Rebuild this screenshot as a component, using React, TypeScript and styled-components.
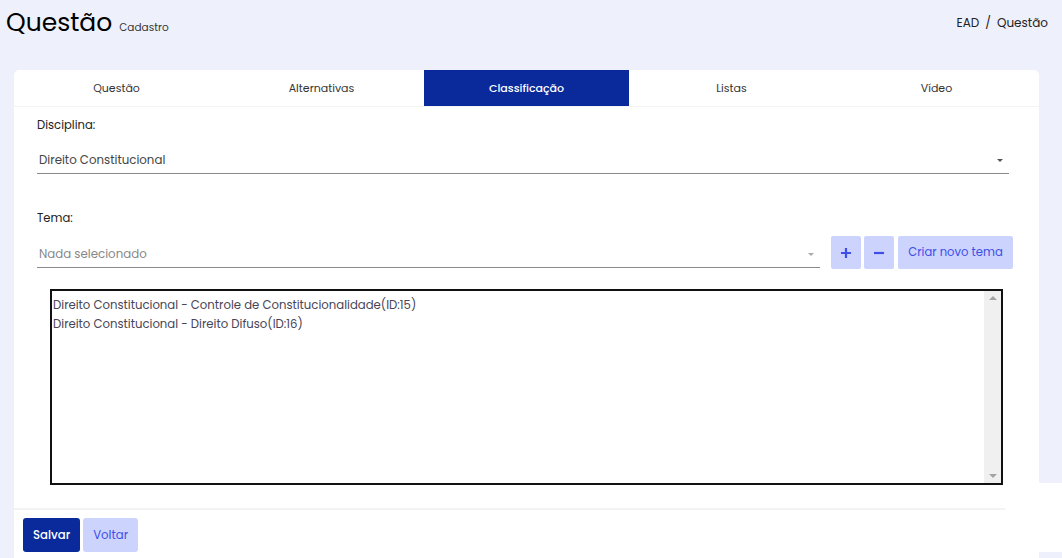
import React from "react";
import styled, { createGlobalStyle } from "styled-components";

const GlobalStyle = createGlobalStyle`
  body {
    margin: 0;
    background: #eef0fb;
    font-family: "Poppins", Inter, "Noto Sans", sans-serif;
    color: #222;
  }
`;

const colors = {
  bg: "#eef0fb",
  primary: "#0a2a9b",
  light: "#ccd4fe",
  lightText: "#3f4ee6",
  text: "#333",
  muted: "#777",
  line: "#8a8a8a",
};

const Page = styled.div`
  width: 1062px;
  height: 558px;
  overflow: hidden;
  position: relative;
`;

const Header = styled.div`
  display: flex;
  justify-content: space-between;
  align-items: flex-start;
  padding: 8px 14px 0 6px;
  height: 61px;
  box-sizing: border-box;
`;

const TitleWrap = styled.div`
  display: flex;
  align-items: baseline;
  gap: 7px;
`;

const Title = styled.h1`
  margin: 0;
  font-size: 25px;
  font-weight: 400;
  color: #000;
  line-height: 30px;
`;

const Subtitle = styled.span`
  font-size: 10.5px;
  color: #333;
`;

const Breadcrumb = styled.div`
  font-size: 12px;
  color: #222;
  padding-top: 6px;
  display: flex;
  gap: 6px;
`;

const Card = styled.div`
  margin: 9px 23px 0 14px;
  background: #fff;
  border-radius: 5px 5px 0 0;
`;

const Tabs = styled.div`
  display: grid;
  grid-template-columns: repeat(5, 1fr);
  height: 36px;
  border-bottom: 1px solid #f4f4f4;
`;

const Tab = styled.div<{ $active?: boolean }>`
  display: flex;
  align-items: center;
  justify-content: center;
  font-size: 11px;
  color: ${(p) => (p.$active ? "#fff" : colors.text)};
  background: ${(p) => (p.$active ? colors.primary : "transparent")};
  font-weight: ${(p) => (p.$active ? 500 : 400)};
`;

const Body = styled.div`
  padding: 10px 30px 23px 23px;
`;

const Label = styled.div`
  font-size: 11.6px;
  color: #222;
  height: 18px;
`;

const SelectBox = styled.div<{ $placeholder?: boolean }>`
  display: flex;
  align-items: center;
  justify-content: space-between;
  border-bottom: 1px solid ${colors.line};
  height: 30px;
  box-sizing: border-box;
  padding: 4px 6px 0 2px;
  font-size: 11.8px;
  color: ${(p) => (p.$placeholder ? "#888" : "#444")};
  flex: 1;
`;

const Caret = styled.span<{ $light?: boolean }>`
  width: 0;
  height: 0;
  border-left: 3px solid transparent;
  border-right: 3px solid transparent;
  border-top: 3px solid ${(p) => (p.$light ? "#aaa" : "#555")};
`;

const DisciplinaSelect = styled.div`
  margin-top: 9px;
  display: flex;
`;

const TemaLabel = styled(Label)`
  margin-top: 36px;
`;

const TemaRow = styled.div`
  display: flex;
  align-items: flex-start;
  margin: 8px -4px 0 0;
  gap: 3px;
`;

const TemaSelect = styled.div`
  display: flex;
  flex: 1;
  margin-right: 8px;
  margin-top: 2px;
`;

const SquareButton = styled.button`
  width: 30px;
  height: 33px;
  border: none;
  border-radius: 2px;
  background: ${colors.light};
  color: ${colors.lightText};
  display: flex;
  align-items: center;
  justify-content: center;
  padding: 0;
`;

const TextButton = styled.button`
  height: 33px;
  width: 115px;
  border: none;
  border-radius: 2px;
  background: ${colors.light};
  color: ${colors.lightText};
  font-family: inherit;
  font-size: 11.6px;
  padding: 0;
  margin-left: 1px;
`;

const ListBox = styled.div`
  margin: 20px 6px 0 13px;
  height: 192px;
  border: 2px solid #111;
  display: flex;
`;

const ListItems = styled.div`
  flex: 1;
  padding: 5px 1px;
  font-size: 11.7px;
  line-height: 19px;
  color: #474556;
`;

const Scrollbar = styled.div`
  width: 17px;
  background: #f0f0f0;
  display: flex;
  flex-direction: column;
  justify-content: space-between;
  align-items: center;
  padding: 5px 0;
`;

const Arrow = styled.span<{ $down?: boolean }>`
  width: 0;
  height: 0;
  border-left: 4px solid transparent;
  border-right: 4px solid transparent;
  ${(p) =>
    p.$down
      ? "border-top: 4px solid #a3a3a3;"
      : "border-bottom: 4px solid #a3a3a3;"}
`;

const Footer = styled.div`
  border-top: 2px solid #f3f3f3;
  margin-right: 34px;
  padding: 8px 9px 10px;
  display: flex;
  gap: 3px;
`;

const FooterButton = styled.button<{ $primary?: boolean }>`
  height: 34px;
  border: none;
  border-radius: 3px;
  padding: 0 10px;
  font-family: inherit;
  font-size: 11.7px;
  font-weight: ${(p) => (p.$primary ? 500 : 400)};
  background: ${(p) => (p.$primary ? colors.primary : colors.light)};
  color: ${(p) => (p.$primary ? "#fff" : colors.lightText)};
`;

const Overlay = styled.div`
  position: absolute;
  right: 0;
  bottom: 6px;
  width: 57px;
  height: 69px;
  background: #fff;
`;

const tabs = ["Questão", "Alternativas", "Classificação", "Listas", "Vídeo"];
const temas = [
  "Direito Constitucional - Controle de Constitucionalidade(ID:15)",
  "Direito Constitucional - Direito Difuso(ID:16)",
];

export default function App() {
  return (
    <Page>
      <GlobalStyle />
      <Header>
        <TitleWrap>
          <Title>Questão</Title>
          <Subtitle>Cadastro</Subtitle>
        </TitleWrap>
        <Breadcrumb>
          <span>EAD</span>
          <span>/</span>
          <span>Questão</span>
        </Breadcrumb>
      </Header>
      <Card>
        <Tabs>
          {tabs.map((t) => (
            <Tab key={t} $active={t === "Classificação"}>
              {t}
            </Tab>
          ))}
        </Tabs>
        <Body>
          <Label>Disciplina:</Label>
          <DisciplinaSelect>
            <SelectBox>
              <span>Direito Constitucional</span>
              <Caret />
            </SelectBox>
          </DisciplinaSelect>
          <TemaLabel>Tema:</TemaLabel>
          <TemaRow>
            <TemaSelect>
              <SelectBox $placeholder>
                <span>Nada selecionado</span>
                <Caret $light />
              </SelectBox>
            </TemaSelect>
            <SquareButton>
              <svg width="12" height="12" viewBox="0 0 12 12">
                <path d="M6 1v10M1 6h10" stroke="currentColor" strokeWidth="2.2" />
              </svg>
            </SquareButton>
            <SquareButton>
              <svg width="12" height="12" viewBox="0 0 12 12">
                <path d="M1 6h10" stroke="currentColor" strokeWidth="2.2" />
              </svg>
            </SquareButton>
            <TextButton>Criar novo tema</TextButton>
          </TemaRow>
          <ListBox>
            <ListItems>
              {temas.map((t) => (
                <div key={t}>{t}</div>
              ))}
            </ListItems>
            <Scrollbar>
              <Arrow />
              <Arrow $down />
            </Scrollbar>
          </ListBox>
        </Body>
        <Footer>
          <FooterButton $primary>Salvar</FooterButton>
          <FooterButton>Voltar</FooterButton>
        </Footer>
      </Card>
      <Overlay />
    </Page>
  );
}
